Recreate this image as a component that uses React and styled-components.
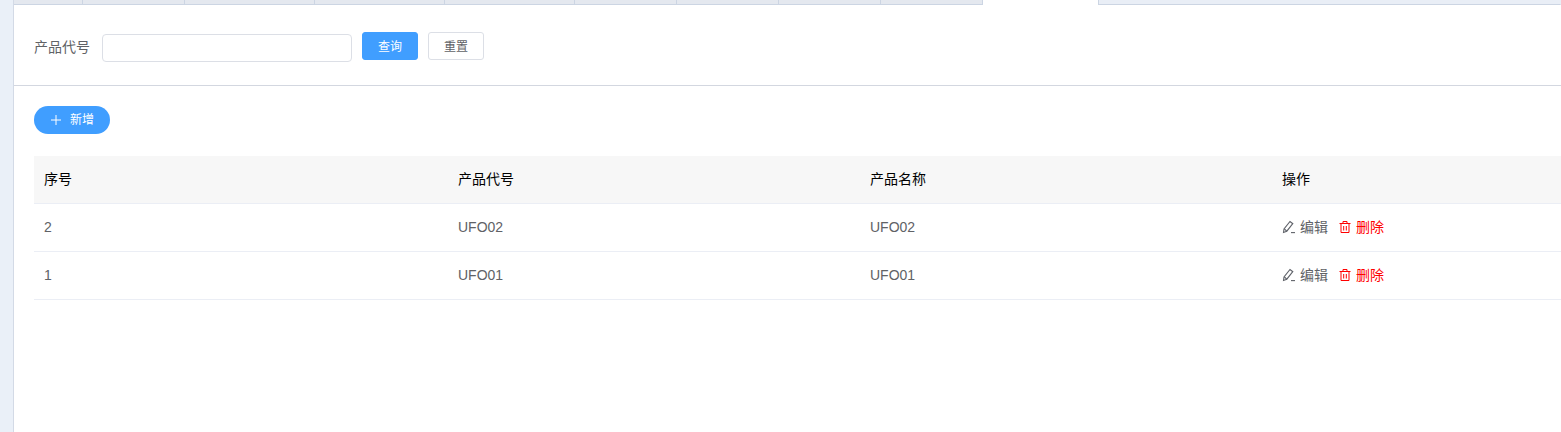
import React from 'react'
import styled, { createGlobalStyle } from 'styled-components'

const GlobalStyle = createGlobalStyle`
  html, body { margin: 0; padding: 0; height: 100%; overflow: hidden; background: #fff; }
  body { font-family: "Liberation Sans", "Noto Sans CJK SC", sans-serif; }
`;

const Page = styled.div`display: flex; width: 1561px; height: 432px; background: #fff;`;
const Rail = styled.div`width: 13px; background: #eaf0f8; border-right: 1px solid #d3dae6; flex: none;`;
const Main = styled.div`flex: 1; min-width: 0; display: flex; flex-direction: column;`;

const TabBar = styled.div`display: flex; height: 5px; flex: none;`;
const Tab = styled.div`
  flex: ${p => (p.$rest ? 1 : 'none')};
  width: ${p => (p.$rest ? 'auto' : `${p.$w}px`)};
  box-sizing: border-box;
  background: ${p => (p.$active ? '#fff' : p.$rest ? '#e9eef6' : '#e4e8ef')};
  border-bottom: ${p => (p.$active ? 'none' : '1px solid #ccd5e3')};
  border-right: 1px solid ${p => (p.$active ? '#ccd5e3' : p.$rest ? 'transparent' : '#ccd5e3')};
`;

const SearchBar = styled.div`
  display: flex;
  align-items: flex-start;
  height: 81px;
  box-sizing: border-box;
  padding: 27px 0 0 20px;
  border-bottom: 1px solid #d3d7e0;
  flex: none;
`;
const Label = styled.label`font-size: 14px; line-height: 30px; color: #606266; width: 68px;`;
const Input = styled.input`
  width: 250px; height: 28px; margin-top: 2px; box-sizing: border-box;
  border: 1px solid #dcdfe6; border-radius: 4px; background: #fff; outline: none;
`;
const Button = styled.button`
  width: 56px; height: 28px; margin-left: 10px; padding: 0 0 2px;
  box-sizing: border-box; font: inherit; font-size: 12px; border-radius: 3px;
  border: 1px solid ${p => (p.$primary ? '#409eff' : '#dcdfe6')};
  background: ${p => (p.$primary ? '#409eff' : '#fff')};
  color: ${p => (p.$primary ? '#fff' : '#606266')};
`;

const Content = styled.div`padding: 20px 0 0 20px; flex: 1;`;
const AddButton = styled.button`
  display: flex; align-items: center; gap: 8px;
  width: 76px; height: 28px; padding: 0 0 0 16px; box-sizing: border-box;
  border: none; border-radius: 14px; background: #409eff; color: #fff;
  font: inherit; font-size: 12px; line-height: 12px;
`;

const Table = styled.div`margin-top: 22px;`;
const Row = styled.div`
  display: grid;
  grid-template-columns: 414px 412px 412px 1fr;
  height: 48px;
  box-sizing: border-box;
  border-bottom: 1px solid #ebeef5;
  background: ${p => (p.$head ? '#f7f7f7' : '#fff')};
  color: ${p => (p.$head ? '#000' : '#606266')};
`;
const Cell = styled.div`
  display: flex; align-items: center; gap: 10px; padding: 0 0 2px 10px;
  font-size: 14px; line-height: 14px;
`;
const Action = styled.span`
  display: inline-flex; align-items: center; gap: 4px;
  color: ${p => (p.$danger ? '#ff0000' : '#606266')};
`;

const PencilIcon = () => (
  <svg width="14" height="14" viewBox="0 0 14 14" fill="none" stroke="#5f6269" strokeWidth="1.1">
    <path d="M1.5 12.5 L2 9 L8 1.5 L10.8 3.7 L4.8 11.2 Z" />
    <path d="M2.4 9 L4.8 11.2" />
    <path d="M9 12.6 H13" />
  </svg>
);

const TrashIcon = () => (
  <svg width="14" height="14" viewBox="0 0 14 14" fill="none" stroke="#ff0000" strokeWidth="1">
    <path d="M1.5 3.5 H12.5" />
    <path d="M5 3.5 V1.5 H9 V3.5" />
    <path d="M3 3.5 V12.5 H11 V3.5" />
    <path d="M5.7 6 V10.5 M8.3 6 V10.5" />
  </svg>
);

const PlusIcon = () => (
  <svg width="12" height="12" viewBox="0 0 12 12" stroke="#fff" strokeWidth="1">
    <path d="M6 1 V11 M1 6 H11" />
  </svg>
);

const tabs = [69, 102, 130, 130, 130, 102, 102, 102, 102];
const rows = [{ id: 2, code: 'UFO02' }, { id: 1, code: 'UFO01' }];

const App = () => {
  return (
    <Page>
      <GlobalStyle />
      <Rail />
      <Main>
        <TabBar>
          {tabs.map((w, i) => <Tab key={i} $w={w} />)}
          <Tab $w={116} $active />
          <Tab $rest />
        </TabBar>
        <SearchBar>
          <Label>产品代号</Label>
          <Input />
          <Button $primary>查询</Button>
          <Button>重置</Button>
        </SearchBar>
        <Content>
          <AddButton><PlusIcon />新增</AddButton>
          <Table>
            <Row $head>
              <Cell>序号</Cell>
              <Cell>产品代号</Cell>
              <Cell>产品名称</Cell>
              <Cell>操作</Cell>
            </Row>
            {rows.map(r => (
              <Row key={r.id}>
                <Cell>{r.id}</Cell>
                <Cell>{r.code}</Cell>
                <Cell>{r.code}</Cell>
                <Cell>
                  <Action><PencilIcon />编辑</Action>
                  <Action $danger><TrashIcon />删除</Action>
                </Cell>
              </Row>
            ))}
          </Table>
        </Content>
      </Main>
    </Page>
  )
}

export default App
